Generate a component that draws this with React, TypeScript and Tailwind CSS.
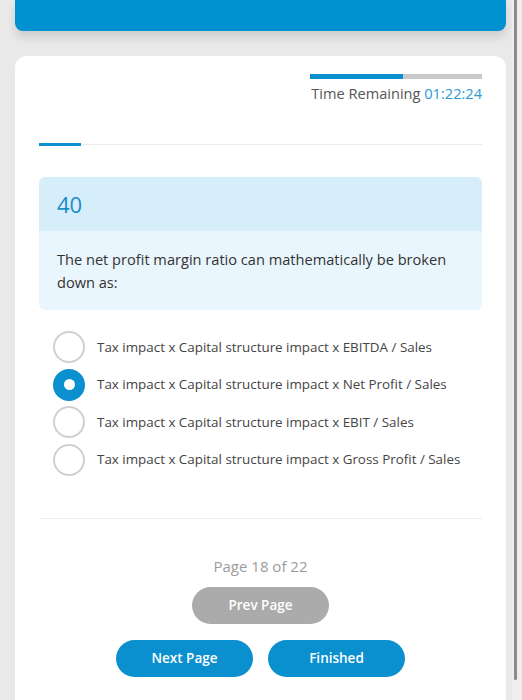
const OPTIONS = [
  "Tax impact x Capital structure impact x EBITDA / Sales",
  "Tax impact x Capital structure impact x Net Profit / Sales",
  "Tax impact x Capital structure impact x EBIT / Sales",
  "Tax impact x Capital structure impact x Gross Profit / Sales",
];

function Radio({ checked }: { checked: boolean }) {
  if (checked) {
    return (
      <span className="flex h-[32px] w-[32px] shrink-0 items-center justify-center rounded-full bg-[#0a8fcf]">
        <span className="h-[11px] w-[11px] rounded-full bg-white" />
      </span>
    );
  }
  return <span className="h-[32px] w-[32px] shrink-0 rounded-full border-2 border-[#cfcfcf] bg-white" />;
}

export default function App() {
  const selected = 1;

  return (
    <div
      className="flex h-[700px] overflow-hidden"
      style={{ fontFamily: '"Open Sans", "Noto Sans", sans-serif' }}
    >
      <div className="flex w-[512px] flex-col bg-[#e9e9e9] pl-[15px] pr-[6px]">
        <div className="h-[31px] shrink-0 rounded-b-lg bg-[#0091d1] shadow-[0_6px_10px_rgba(0,0,0,0.12)]" />

        <div className="mt-[25px] flex flex-1 flex-col rounded-t-xl bg-white px-[24px] pt-[18px]">
          {/* timer */}
          <div className="flex flex-col items-end">
            <div className="flex h-[5px] w-[172px] bg-[#c9c9c9]">
              <div className="h-full w-[93px] bg-[#0a8fcf]" />
            </div>
            <div className="mt-[4px] text-[14.6px] leading-[20px] text-[#555]">
              Time Remaining <span className="text-[#2c9bd6]">01:22:24</span>
            </div>
          </div>

          {/* tab line */}
          <div className="relative mt-[41px] h-px bg-[#ececec]">
            <div className="absolute left-0 top-[-1px] h-[3px] w-[42px] bg-[#0a8fcf]" />
          </div>

          {/* question */}
          <div className="mt-[32px] overflow-hidden rounded-md">
            <div className="flex h-[54px] items-center bg-[#d6eef9] px-[18px] text-[22px] text-[#1a8cc8]">
              40
            </div>
            <div className="bg-[#eaf6fd] px-[18px] pb-[16px] pt-[17px] text-[14.6px] leading-[23px] text-[#333]">
              The net profit margin ratio can mathematically be broken down as:
            </div>
          </div>

          {/* options */}
          <div className="mt-[21px] flex flex-col gap-[5.5px] pl-[14px]">
            {OPTIONS.map((opt, i) => (
              <label key={opt} className="flex h-[32px] items-center gap-[12px]">
                <Radio checked={i === selected} />
                <span className="text-[13.4px] text-[#444]">{opt}</span>
              </label>
            ))}
          </div>

          <div className="mt-[42px] h-px bg-[#ececec]" />

          {/* paging */}
          <div className="mt-[37px] text-center text-[15px] leading-[20px] text-[#9c9c9c]">
            Page 18 of 22
          </div>
          <div className="mt-[11px] flex justify-center">
            <button className="h-[37px] w-[137px] rounded-full bg-[#ababab] text-[13.5px] font-semibold text-white">
              Prev Page
            </button>
          </div>
          <div className="mt-[16px] flex justify-center gap-[15px]">
            <button className="h-[37px] w-[137px] rounded-full bg-[#0a8fcf] text-[13.5px] font-semibold text-white">
              Next Page
            </button>
            <button className="h-[37px] w-[137px] rounded-full bg-[#0a8fcf] text-[13.5px] font-semibold text-white">
              Finished
            </button>
          </div>
        </div>
      </div>

      {/* scrollbar */}
      <div className="flex w-[10px] bg-[#eeeeee] pl-[2px] pb-[20px]">
        <div className="w-[3px] rounded-b-sm bg-[#8a8a8a]" />
      </div>
    </div>
  );
}
